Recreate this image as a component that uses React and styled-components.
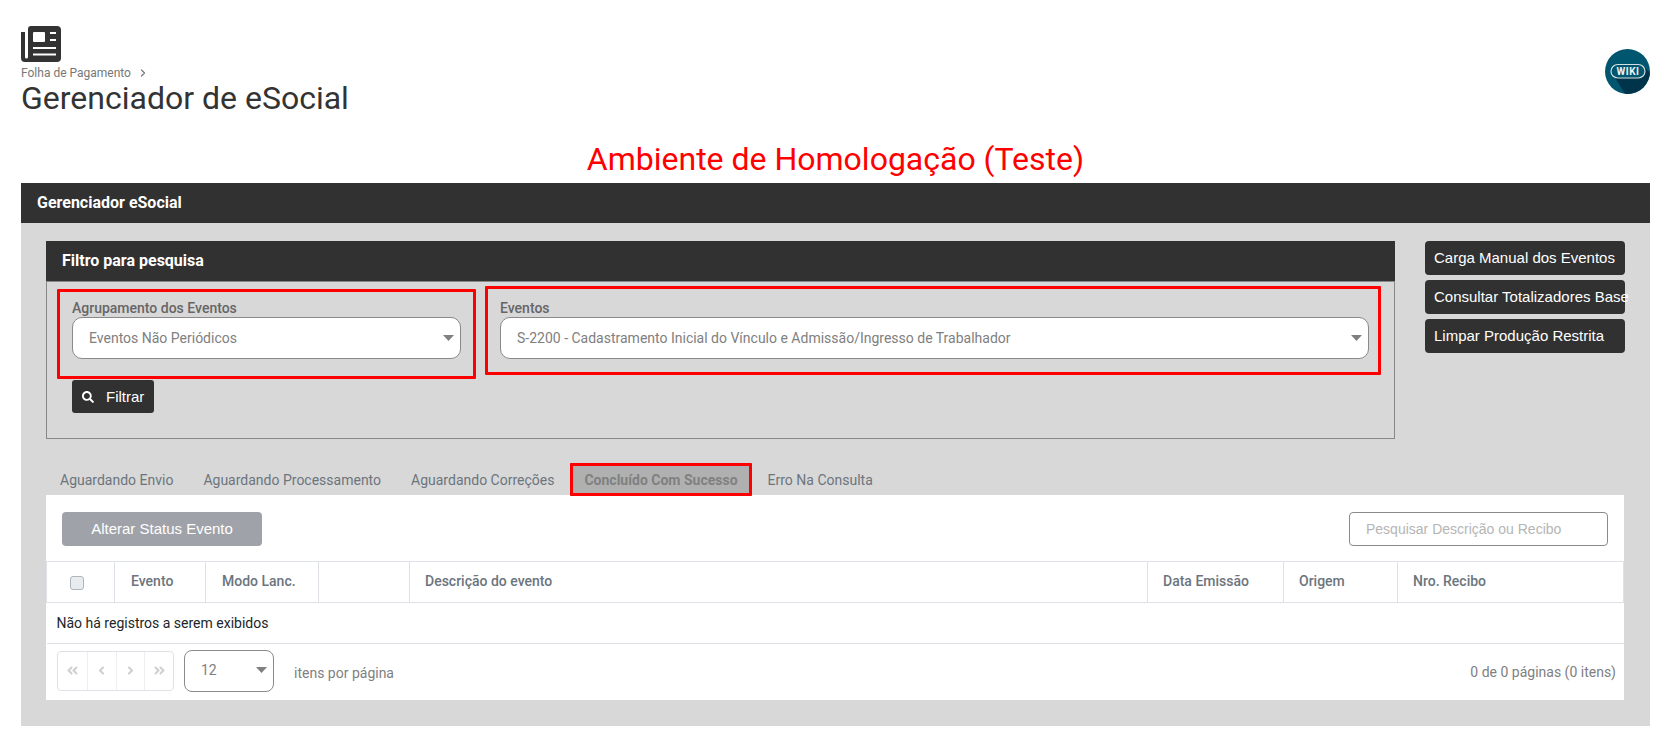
import styled, { createGlobalStyle } from 'styled-components'
import { FaSearch, FaAngleLeft, FaAngleRight, FaAngleDoubleLeft, FaAngleDoubleRight } from 'react-icons/fa'
import { ChevronRight } from 'lucide-react'

const GlobalStyle = createGlobalStyle`
    html, body { margin: 0; padding: 0; background: #fff; }
    body { font-family: Roboto, "Liberation Sans", sans-serif; font-size: 14px; color: #212529; }
    * { box-sizing: border-box; }
`

const tabs = ['Aguardando Envio', 'Aguardando Processamento', 'Aguardando Correções', 'Concluído Com Sucesso', 'Erro Na Consulta']
const columns = [
    { label: '', width: 68 },
    { label: 'Evento', width: 91 },
    { label: 'Modo Lanc.', width: 113 },
    { label: '', width: 91 },
    { label: 'Descrição do evento', width: 738 },
    { label: 'Data Emissão', width: 136 },
    { label: 'Origem', width: 114 },
    { label: 'Nro. Recibo', width: 226 },
]

const Caret = () => (
    <svg width="11" height="6" viewBox="0 0 11 6"><path d="M0 0h11L5.5 6z" fill="#808080" /></svg>
)

const NewspaperIcon = () => (
    <svg width="40" height="36" viewBox="0 0 40 36">
        <path d="M0 6H4V31a1.5 1.5 0 0 0 3 0V3a3 3 0 0 1 3-3H36a4 4 0 0 1 4 4V32a4 4 0 0 1-4 4H4a4 4 0 0 1-4-4Z" fill="#333" />
        <rect x="12" y="6" width="12" height="10" rx="1" fill="#fff" />
        <rect x="29" y="6" width="6" height="2" fill="#fff" />
        <rect x="29" y="13" width="6" height="2" fill="#fff" />
        <rect x="12" y="21" width="23" height="2" fill="#fff" />
        <rect x="12" y="27.5" width="23" height="2" fill="#fff" />
    </svg>
)

const WikiBadge = () => (
    <svg width="45" height="45" viewBox="0 0 45 45">
        <defs><clipPath id="wikiClip"><circle cx="22.5" cy="22.5" r="22.5" /></clipPath></defs>
        <circle cx="22.5" cy="22.5" r="22.5" fill="#00566e" />
        <path d="M9 27 L38 17 L62 41 L33 66z" fill="#00344a" clipPath="url(#wikiClip)" />
        <rect x="6" y="15.5" width="34" height="13.5" rx="6.75" fill="#00566e" stroke="#d5e0e3" strokeWidth="1.2" />
        <text x="23" y="26" textAnchor="middle" fontFamily="Roboto, sans-serif" fontWeight="700" fontSize="10" letterSpacing=".5" fill="#eef3f4">WIKI</text>
    </svg>
)

const App = () => {
  return (
    <Page>
        <GlobalStyle />
        <TopBar>
            <TitleBlock>
                <NewspaperIcon />
                <Breadcrumb>Folha de Pagamento <ChevronRight size={12} strokeWidth={2.4} /></Breadcrumb>
                <PageTitle>Gerenciador de eSocial</PageTitle>
            </TitleBlock>
            <WikiSlot><WikiBadge /></WikiSlot>
        </TopBar>

        <EnvBanner>Ambiente de Homologação (Teste)</EnvBanner>

        <PanelHeader>Gerenciador eSocial</PanelHeader>
        <Panel>
            <FilterRow>
                <FilterBox>
                    <FilterHeader>Filtro para pesquisa</FilterHeader>
                    <FilterBody>
                        <Fields>
                            <Field $width="389px">
                                <Highlight $inset="-11px -15px -20px -15px" />
                                <Label>Agrupamento dos Eventos</Label>
                                <Select>Eventos Não Periódicos<Caret /></Select>
                            </Field>
                            <Field $width="869px">
                                <Highlight $inset="-14px -12px -16px -15px" />
                                <Label>Eventos</Label>
                                <Select>S-2200 - Cadastramento Inicial do Vínculo e Admissão/Ingresso de Trabalhador<Caret /></Select>
                            </Field>
                        </Fields>
                        <FilterButton><FaSearch size={12} />Filtrar</FilterButton>
                    </FilterBody>
                </FilterBox>
                <SideActions>
                    <SideButton>Carga Manual dos Eventos</SideButton>
                    <SideButton>Consultar Totalizadores Base</SideButton>
                    <SideButton>Limpar Produção Restrita</SideButton>
                </SideActions>
            </FilterRow>

            <TabBar>
                {tabs.map((t, i) => (
                    <Tab key={t} $active={i === 3}>
                        {i === 3 && <Highlight $inset="0" />}
                        {t}
                    </Tab>
                ))}
            </TabBar>
            <Card>
                <CardTools>
                    <GhostButton>Alterar Status Evento</GhostButton>
                    <SearchBox>Pesquisar Descrição ou Recibo</SearchBox>
                </CardTools>
                <Table>
                    <colgroup>
                        {columns.map((c, i) => <col key={i} style={{ width: c.width }} />)}
                    </colgroup>
                    <thead>
                        <tr>
                            {columns.map((c, i) => (
                                <Th key={i}>{i === 0 ? <Check /> : c.label}</Th>
                            ))}
                        </tr>
                    </thead>
                    <tbody>
                        <tr><EmptyCell colSpan={8}>Não há registros a serem exibidos</EmptyCell></tr>
                    </tbody>
                </Table>
                <Pager>
                    <PagerLeft>
                        <PageButtons>
                            <PageButton><FaAngleDoubleLeft size={13} /></PageButton>
                            <PageButton><FaAngleLeft size={13} /></PageButton>
                            <PageButton><FaAngleRight size={13} /></PageButton>
                            <PageButton><FaAngleDoubleRight size={13} /></PageButton>
                        </PageButtons>
                        <PageSize>12<Caret /></PageSize>
                        <PagerLabel>itens por página</PagerLabel>
                    </PagerLeft>
                    <PagerText>0 de 0 páginas (0 itens)</PagerText>
                </Pager>
            </Card>
        </Panel>
    </Page>
  )
}

export default App;


const Page = styled.div `
    width:1670px;
    height:756px;
    padding:26px 20px 0 21px;
    overflow:hidden;
`

const TopBar = styled.div `
    display:flex;
    justify-content:space-between;
    height:91px;
`

const TitleBlock = styled.div `
    display:flex;
    flex-direction:column;
    align-items:flex-start;
`

const Breadcrumb = styled.div `
    display:flex;
    align-items:center;
    gap:6px;
    height:12px;
    margin-top:5px;
    font-size:12px;
    color:#777;
`

const PageTitle = styled.h1 `
    margin:0;
    font-size:32px;
    font-weight:400;
    line-height:38px;
    color:#333;
`

const WikiSlot = styled.div `
    margin-top:23px;
`

const EnvBanner = styled.div `
    height:66px;
    padding-top:20px;
    text-align:center;
    font-size:32px;
    line-height:44px;
    color:#f00;
`

const PanelHeader = styled.div `
    height:40px;
    padding-left:16px;
    line-height:40px;
    background:#313131;
    color:#fff;
    font-size:16px;
    font-weight:700;
`

const Panel = styled.div `
    height:503px;
    padding:18px 25px 0;
    background:#d8d8d8;
`

const FilterRow = styled.div `
    display:flex;
    gap:30px;
`

const FilterBox = styled.div `
    width:1349px;
`

const FilterHeader = styled.div `
    height:40px;
    padding-left:16px;
    line-height:40px;
    background:#313131;
    color:#fff;
    font-size:16px;
    font-weight:700;
`

const FilterBody = styled.div `
    height:158px;
    padding:18px 25px 0;
    border:1px solid #888;
`

const Fields = styled.div `
    display:flex;
    gap:39px;
`

const Field = styled.div `
    position:relative;
    width:${p => p.$width};
`

const Highlight = styled.div `
    position:absolute;
    inset:${p => p.$inset};
    border:3px solid #f00;
    border-radius:1px;
    pointer-events:none;
`

const Label = styled.div `
    height:17px;
    font-size:14px;
    font-weight:500;
    line-height:17px;
    color:#666;
`

const Select = styled.div `
    display:flex;
    align-items:center;
    justify-content:space-between;
    height:42px;
    padding:0 6px 0 16px;
    background:#fff;
    border:1px solid #8a8a8a;
    border-radius:10px;
    font-size:14px;
    color:#808080;
`

const FilterButton = styled.button `
    display:flex;
    align-items:center;
    gap:12px;
    width:82px;
    height:33px;
    margin-top:21px;
    padding:0 0 0 10px;
    background:#313131;
    border:none;
    border-radius:3px;
    color:#fff;
    font-family:"Liberation Sans", sans-serif;
    font-size:15px;
`

const SideActions = styled.div `
    display:flex;
    flex-direction:column;
    gap:5px;
`

const SideButton = styled.button `
    width:200px;
    height:34px;
    padding:0 0 2px 9px;
    background:#313131;
    border:none;
    border-radius:4px;
    color:#fff;
    font-family:"Liberation Sans", sans-serif;
    font-size:15px;
    text-align:left;
    white-space:nowrap;
`

const TabBar = styled.div `
    display:flex;
    gap:2px;
    height:32px;
    margin-top:24px;
`

const Tab = styled.div `
    position:relative;
    height:33px;
    padding:0 14px;
    line-height:34px;
    font-size:14px;
    font-weight:${p => p.$active ? 700 : 400};
    color:${p => p.$active ? '#808080' : '#6c757d'};
    background:${p => p.$active ? '#b0b0b0' : 'transparent'};
`

const Card = styled.div `
    width:1578px;
    height:205px;
    background:#fff;
`

const CardTools = styled.div `
    display:flex;
    justify-content:space-between;
    height:66px;
    padding:17px 16px 0;
`

const GhostButton = styled.button `
    width:200px;
    height:34px;
    padding:0 0 2px;
    background:#9fa3a9;
    border:none;
    border-radius:4px;
    color:#fff;
    font-family:"Liberation Sans", sans-serif;
    font-size:15px;
`

const SearchBox = styled.div `
    width:259px;
    height:34px;
    padding-left:16px;
    line-height:32px;
    border:1px solid #8a8a8a;
    border-radius:4px;
    font-family:"Liberation Sans", sans-serif;
    font-size:14px;
    color:#b5b5b5;
`

const Table = styled.table `
    width:1577px;
    border-collapse:collapse;
    table-layout:fixed;
`

const Th = styled.th `
    height:41px;
    padding:0 15px 2px;
    border:1px solid #dee2e6;
    text-align:left;
    font-size:14px;
    font-weight:500;
    color:#6c757d;
    &:nth-child(-n+3) { padding-left:16px; }
`

const Check = styled.span `
    display:block;
    width:14px;
    height:14px;
    margin:4px 0 0 7px;
    background:#e9ecef;
    border:1px solid #adb5bd;
    border-radius:3px;
`

const EmptyCell = styled.td `
    height:41px;
    padding:0 10px;
    border-bottom:1px solid #dee2e6;
    font-size:14px;
    color:#212529;
`

const Pager = styled.div `
    display:flex;
    align-items:center;
    justify-content:space-between;
    height:55px;
    padding:0 8px 0 11px;
`

const PagerLeft = styled.div `
    display:flex;
    align-items:center;
`

const PageButtons = styled.div `
    display:flex;
    margin-bottom:2px;
    border:1px solid #dee2e6;
    border-radius:4px;
`

const PageButton = styled.div `
    display:flex;
    align-items:center;
    justify-content:center;
    width:28.75px;
    height:38px;
    color:#cfcfcf;
    border-left:1px solid #eee;
    &:first-child { border-left:none; }
`

const PageSize = styled.div `
    display:flex;
    align-items:center;
    justify-content:space-between;
    width:90px;
    height:42px;
    margin:0 20px 2px 10px;
    padding:0 6px 2px 16px;
    border:1px solid #8a8a8a;
    border-radius:8px;
    font-size:14px;
    color:#808080;
`

const PagerText = styled.span `
    font-size:14px;
    color:#808080;
`

const PagerLabel = styled(PagerText) `
    padding-top:2px;
`
